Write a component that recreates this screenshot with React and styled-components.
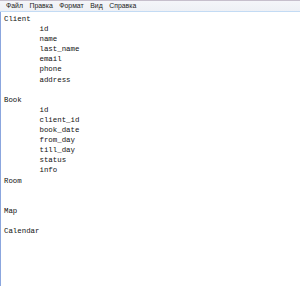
import React from 'react';
import styled, { createGlobalStyle } from 'styled-components';

const menuItems = ['Файл', 'Правка', 'Формат', 'Вид', 'Справка'];

const lines = [
    { text: 'Client' },
    { text: 'id', indent: true },
    { text: 'name', indent: true },
    { text: 'last_name', indent: true },
    { text: 'email', indent: true },
    { text: 'phone', indent: true },
    { text: 'address', indent: true },
    { text: '' },
    { text: 'Book' },
    { text: 'id', indent: true },
    { text: 'client_id', indent: true },
    { text: 'book_date', indent: true },
    { text: 'from_day', indent: true },
    { text: 'till_day', indent: true },
    { text: 'status', indent: true },
    { text: 'info', indent: true },
    { text: 'Room' },
    { text: '' },
    { text: '' },
    { text: 'Map' },
    { text: '' },
    { text: 'Calendar' },
];

const Notepad = () => {
    return (
        <Window>
            <MenuBar>
                {menuItems.map((item) => (
                    <MenuItem key={item}>{item}</MenuItem>
                ))}
            </MenuBar>
            <Editor>
                {lines.map((line, i) => (
                    <Line key={i} $indent={line.indent}>{line.text}</Line>
                ))}
            </Editor>
        </Window>
    );
}

const GlobalStyle = createGlobalStyle`
    html, body {
        margin: 0;
        padding: 0;
        background: #ffffff;
    }
`;

const Window = styled.div`
    display: flex;
    flex-direction: column;
    width: 300px;
    height: 286px;
    background: #ffffff;
    border-top: 1px solid #c6bfcc;
    box-sizing: border-box;
    overflow: hidden;
`;

const MenuBar = styled.div`
    display: flex;
    align-items: center;
    height: 10px;
    padding-left: 6px;
    gap: 6.5px;
    background: linear-gradient(#f4f5f9, #eef0f5);
    border-bottom: 1px solid #c3dbf4;
    font-family: "Liberation Sans", Arial, sans-serif;
    font-size: 6.9px;
    color: #222222;
`;

const MenuItem = styled.span`
    line-height: 10px;
`;

const Editor = styled.div`
    flex: 1;
    padding: 2px 0 0 3px;
    border-left: 1px solid #8ba6de;
    font-family: "Liberation Mono", "DejaVu Sans Mono", monospace;
    font-size: 7.4px;
    color: #111111;
`;

const Line = styled.div`
    height: 10.1px;
    line-height: 10.1px;
    white-space: pre;
    padding-left: ${props => props.$indent ? '35.5px' : '0'};
`;

const App = () => (
    <>
        <GlobalStyle />
        <Notepad />
    </>
);

export default App;
